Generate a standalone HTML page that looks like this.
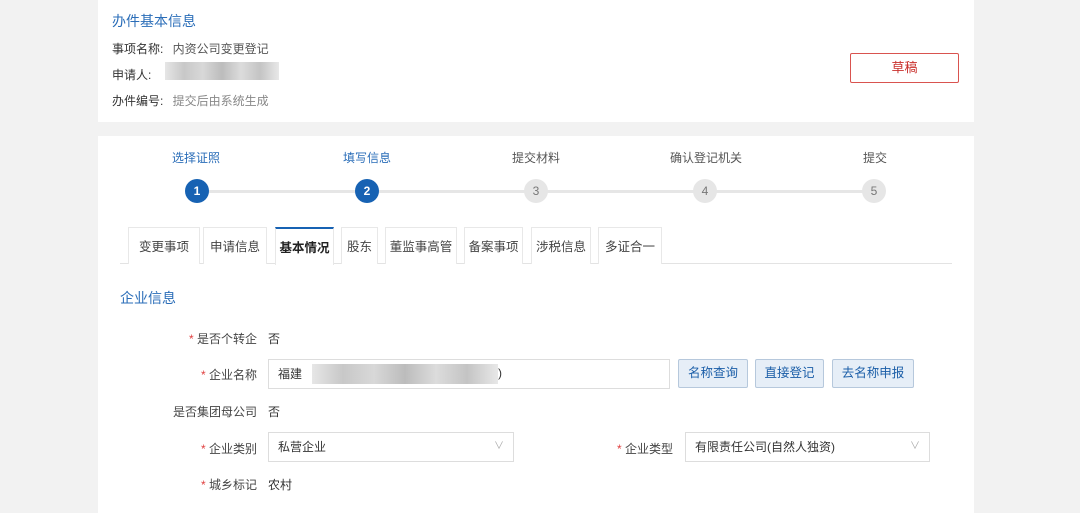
<!DOCTYPE html><html><head><meta charset="utf-8"><style>
*{margin:0;padding:0;box-sizing:border-box}
body{width:1080px;height:513px;background:#f2f2f2;font-family:"Liberation Sans","Noto Sans CJK SC",sans-serif;font-size:12px;color:#333;position:relative;overflow:hidden}
.a{position:absolute;white-space:nowrap}
.p{position:absolute;background:#fff;left:98px;width:876px}
.blur{position:absolute;background:linear-gradient(90deg,#e6e6e6,#c8c8c8,#d8d8d8,#bcbcbc,#dcdcdc,#c4c4c4,#e8e8e8)}
.c{position:absolute;width:24px;height:24px;border-radius:50%;text-align:center;line-height:24px;font-size:12px;top:179px}
.c.on{background:#1762b3;color:#fff;font-weight:bold}
.c.off{background:#e6e6e6;color:#777}
.t{position:absolute;top:227px;height:37px;border:1px solid #e8e8e8;border-bottom:none;text-align:center;line-height:38px;font-size:12.5px;color:#444;background:#fff}
.lab{position:absolute;text-align:right;width:160px;left:97px;font-size:12px;color:#444}
.s{color:#e04040}
.inp{position:absolute;border:1px solid #ddd;height:30px;line-height:28px;padding-left:9px;font-size:12px;background:#fff}
.btn{position:absolute;top:359px;height:29px;border:1px solid #b6c8dc;background:#e6eef7;color:#1b5ea8;line-height:27px;text-align:center;font-size:12.5px;border-radius:2px}
</style></head><body>
<div class="p" style="top:0;height:122px"></div>
<div class="a" style="left:112px;top:11px;font-size:14px;color:#2a6db8">办件基本信息</div>
<div class="a" style="left:112px;top:40px;color:#333">事项名称: <span style="color:#555;margin-left:6px">内资公司变更登记</span></div>
<div class="a" style="left:112px;top:66px">申请人:</div>
<div class="blur" style="left:165px;top:62px;width:114px;height:18px"></div>
<div class="a" style="left:112px;top:92px">办件编号: <span style="color:#888;margin-left:6px">提交后由系统生成</span></div>
<div class="a" style="left:850px;top:53px;width:109px;height:30px;border:1px solid #d9534f;border-radius:2px;color:#c9302c;text-align:center;line-height:28px;font-size:13px">草稿</div>

<div class="p" style="top:136px;height:377px"></div>
<div class="a" style="left:172px;top:149px;color:#2a6db8">选择证照</div>
<div class="a" style="left:343px;top:149px;color:#2a6db8">填写信息</div>
<div class="a" style="left:512px;top:149px;color:#555">提交材料</div>
<div class="a" style="left:670px;top:149px;color:#555">确认登记机关</div>
<div class="a" style="left:863px;top:149px;color:#555">提交</div>
<div class="a" style="left:197px;top:190px;width:677px;height:3px;background:#e6e6e6"></div>
<div class="c on" style="left:185px">1</div>
<div class="c on" style="left:355px">2</div>
<div class="c off" style="left:524px">3</div>
<div class="c off" style="left:693px">4</div>
<div class="c off" style="left:862px">5</div>

<div class="a" style="left:120px;top:263px;width:832px;height:1px;background:#e3e3e3"></div>
<div class="t" style="left:128px;width:72px">变更事项</div>
<div class="t" style="left:203px;width:64px">申请信息</div>
<div class="t" style="left:275px;width:59px;border-top:2px solid #1762b3;font-weight:bold;color:#222;height:38px">基本情况</div>
<div class="t" style="left:341px;width:37px">股东</div>
<div class="t" style="left:385px;width:72px">董监事高管</div>
<div class="t" style="left:464px;width:59px">备案事项</div>
<div class="t" style="left:531px;width:60px">涉税信息</div>
<div class="t" style="left:598px;width:64px">多证合一</div>

<div class="a" style="left:120px;top:288px;font-size:14px;color:#2a6db8">企业信息</div>
<div class="lab" style="top:330px"><span class="s">* </span>是否个转企</div><div class="a" style="left:268px;top:330px">否</div>
<div class="lab" style="top:366px"><span class="s">* </span>企业名称</div>
<div class="inp" style="left:268px;top:359px;width:402px">福建</div>
<div class="blur" style="left:312px;top:364px;width:186px;height:20px"></div>
<div class="a" style="left:498px;top:366px">)</div>
<div class="btn" style="left:678px;width:70px">名称查询</div>
<div class="btn" style="left:755px;width:69px">直接登记</div>
<div class="btn" style="left:832px;width:82px">去名称申报</div>
<div class="lab" style="top:403px">是否集团母公司</div><div class="a" style="left:268px;top:403px">否</div>
<div class="lab" style="top:440px"><span class="s">* </span>企业类别</div>
<div class="inp" style="left:268px;top:432px;width:246px">私营企业<span style="position:absolute;right:9px;color:#aaa;font-size:10px">∨</span></div>
<div class="a" style="left:617px;top:440px;color:#444"><span class="s">* </span>企业类型</div>
<div class="inp" style="left:685px;top:432px;width:245px">有限责任公司(自然人独资)<span style="position:absolute;right:9px;color:#aaa;font-size:10px">∨</span></div>
<div class="lab" style="top:476px"><span class="s">* </span>城乡标记</div><div class="a" style="left:268px;top:476px">农村</div>
</body></html>
